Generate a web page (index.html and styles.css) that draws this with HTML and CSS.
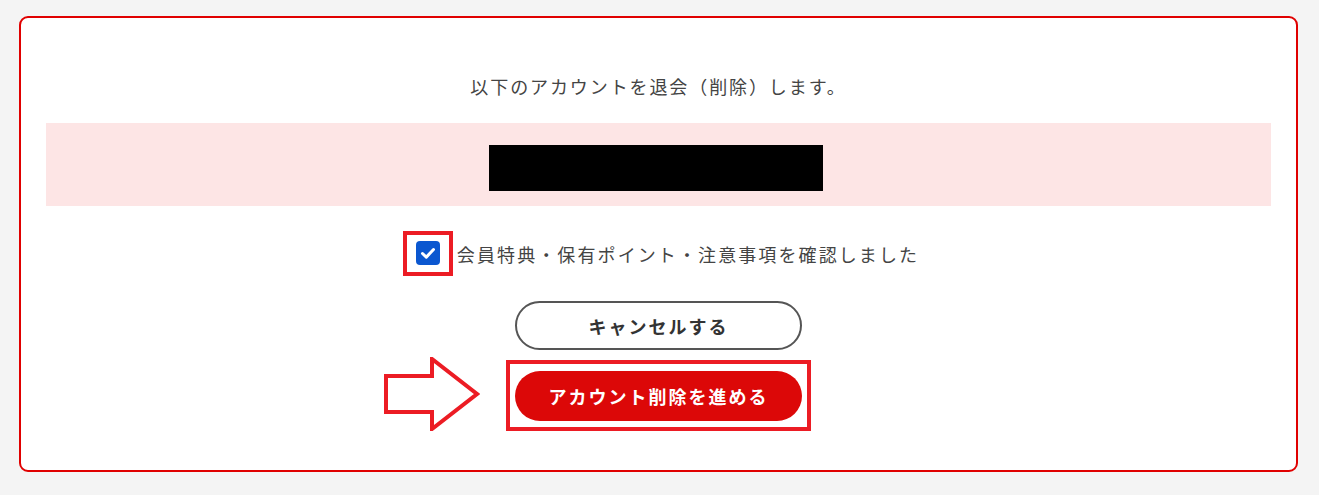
FILE: index.html
```html
<!DOCTYPE html>
<html lang="ja">
<head>
  <meta charset="UTF-8">
  <meta name="viewport" content="width=device-width, initial-scale=1.0">
  <title>退会手続き</title>
  <link rel="stylesheet" href="styles.css">
</head>
<body>
  <div class="card">
    <p class="lead">以下のアカウントを退会（削除）します。</p>

    <div class="account">
      <div class="masked"></div>
    </div>

    <label class="agree">
      <span class="mark-box">
        <span class="checkbox">
          <svg width="24" height="24" viewBox="0 0 24 24">
            <path d="M6.5 12.5l3.8 3.6 7.2-7.6" fill="none" stroke="#fff" stroke-width="3" stroke-linecap="round" stroke-linejoin="round"/>
          </svg>
        </span>
      </span>
      <span class="agree-text">会員特典・保有ポイント・注意事項を確認しました</span>
    </label>

    <div class="actions">
      <button class="btn btn-cancel">キャンセルする</button>
      <div class="highlight">
        <svg class="arrow" width="96" height="74" viewBox="0 0 96 74">
          <polygon points="2,19 48,19 48,2 93,37 48,72 48,55 2,55" fill="none" stroke="#ec1c24" stroke-width="4" stroke-linejoin="miter"/>
        </svg>
        <button class="btn btn-delete">アカウント削除を進める</button>
      </div>
    </div>
  </div>
</body>
</html>
```

FILE: styles.css
```css
body {
  margin: 0;
  padding: 16px 21px 23px 19px;
  background-color: #f4f4f4;
  font-family: "Noto Sans CJK JP", "Noto Sans", sans-serif;
  color: #444;
}
.card {
  background-color: #fff;
  border: 2px solid #e00000;
  border-radius: 9px;
  padding: 55px 25px 39px;
  text-align: center;
}
.lead {
  margin: 0 0 23px;
  font-size: 18px;
  line-height: 27px;
  letter-spacing: 1.9px;
  color: #444;
}
.account {
  background-color: #fde5e5;
  padding: 22px 0 15px;
  display: flex;
  justify-content: center;
}
.masked {
  width: 334px;
  height: 46px;
  margin-right: 6px;
  background-color: #000;
}
.agree {
  margin-top: 25px;
  margin-left: 5px;
  display: inline-flex;
  align-items: center;
  gap: 4px;
  cursor: pointer;
}
.mark-box {
  display: flex;
  border: 4px solid #ec1c24;
  padding: 6px 9px 7px 9px;
}
.checkbox {
  width: 24px;
  height: 24px;
  background-color: #0b57d0;
  border-radius: 4px;
  display: flex;
}
.agree-text {
  font-size: 18px;
  letter-spacing: 2.1px;
  color: #444;
}
.actions {
  margin-top: 25px;
  display: flex;
  flex-direction: column;
  align-items: center;
  gap: 10px;
}
.btn {
  width: 287px;
  height: 50px;
  border-radius: 25px;
  font-family: inherit;
  font-size: 18px;
  font-weight: 700;
  letter-spacing: 2px;
  cursor: pointer;
}
.btn-cancel {
  height: 49px;
  background-color: #fff;
  border: 2px solid #555;
  color: #333;
}
.highlight {
  position: relative;
  border: 4px solid #ec1c24;
  padding: 7px 5px 6px 5px;
  display: flex;
}
.btn-delete {
  background-color: #dc0808;
  border: none;
  color: #fff;
}
.arrow {
  position: absolute;
  left: -126px;
  top: -7px;
}
```
